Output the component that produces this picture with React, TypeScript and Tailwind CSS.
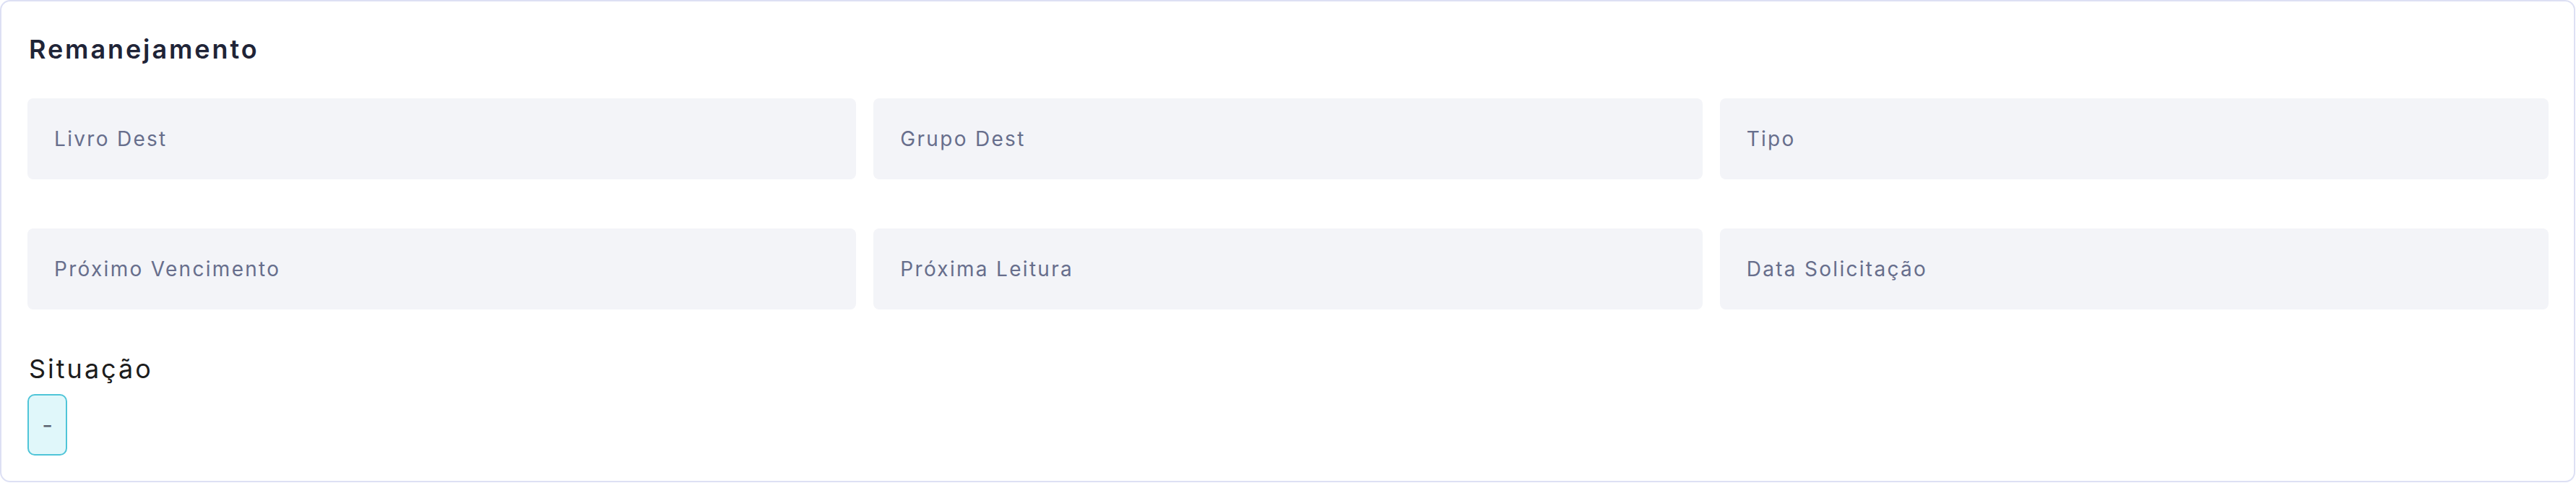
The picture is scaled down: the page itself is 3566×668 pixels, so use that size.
import React from 'react'

const fields = [
  'Livro Dest',
  'Grupo Dest',
  'Tipo',
  'Próximo Vencimento',
  'Próxima Leitura',
  'Data Solicitação',
]

const Field = ({ label }: { label: string }) => (
  <div className="h-[112px] rounded-[8px] bg-[#f3f4f8] px-[37px] flex items-center">
    <span className="text-[28px] text-[#676e8c] tracking-[2.3px]">{label}</span>
  </div>
)

export default function App() {
  return (
    <div className="bg-white font-['Inter',sans-serif]">
      <div className="w-[3565px] h-[667px] border-2 border-[#dde0f4] rounded-[14px] pt-[44px] pl-[36px] pr-[35px]">
        <h2 className="text-[36px] leading-[44px] font-semibold text-[#1f2437] pl-[2px] tracking-[2.9px]">
          Remanejamento
        </h2>

        <div className="mt-[46px] grid grid-cols-3 gap-x-[24px] gap-y-[68px]">
          {fields.map((f) => (
            <Field key={f} label={f} />
          ))}
        </div>

        <div className="mt-[60px]">
          <div className="text-[36px] leading-[44px] text-[#1c1c1c] pl-[2px] tracking-[3px]">Situação</div>
          <div className="mt-[13px] w-[55px] h-[85px] rounded-[10px] border-2 border-[#4fc5d8] bg-[#e0f7fa] flex items-center justify-center">
            <span className="text-[32px] leading-none text-[#5a6270]">-</span>
          </div>
        </div>
      </div>
    </div>
  )
}
